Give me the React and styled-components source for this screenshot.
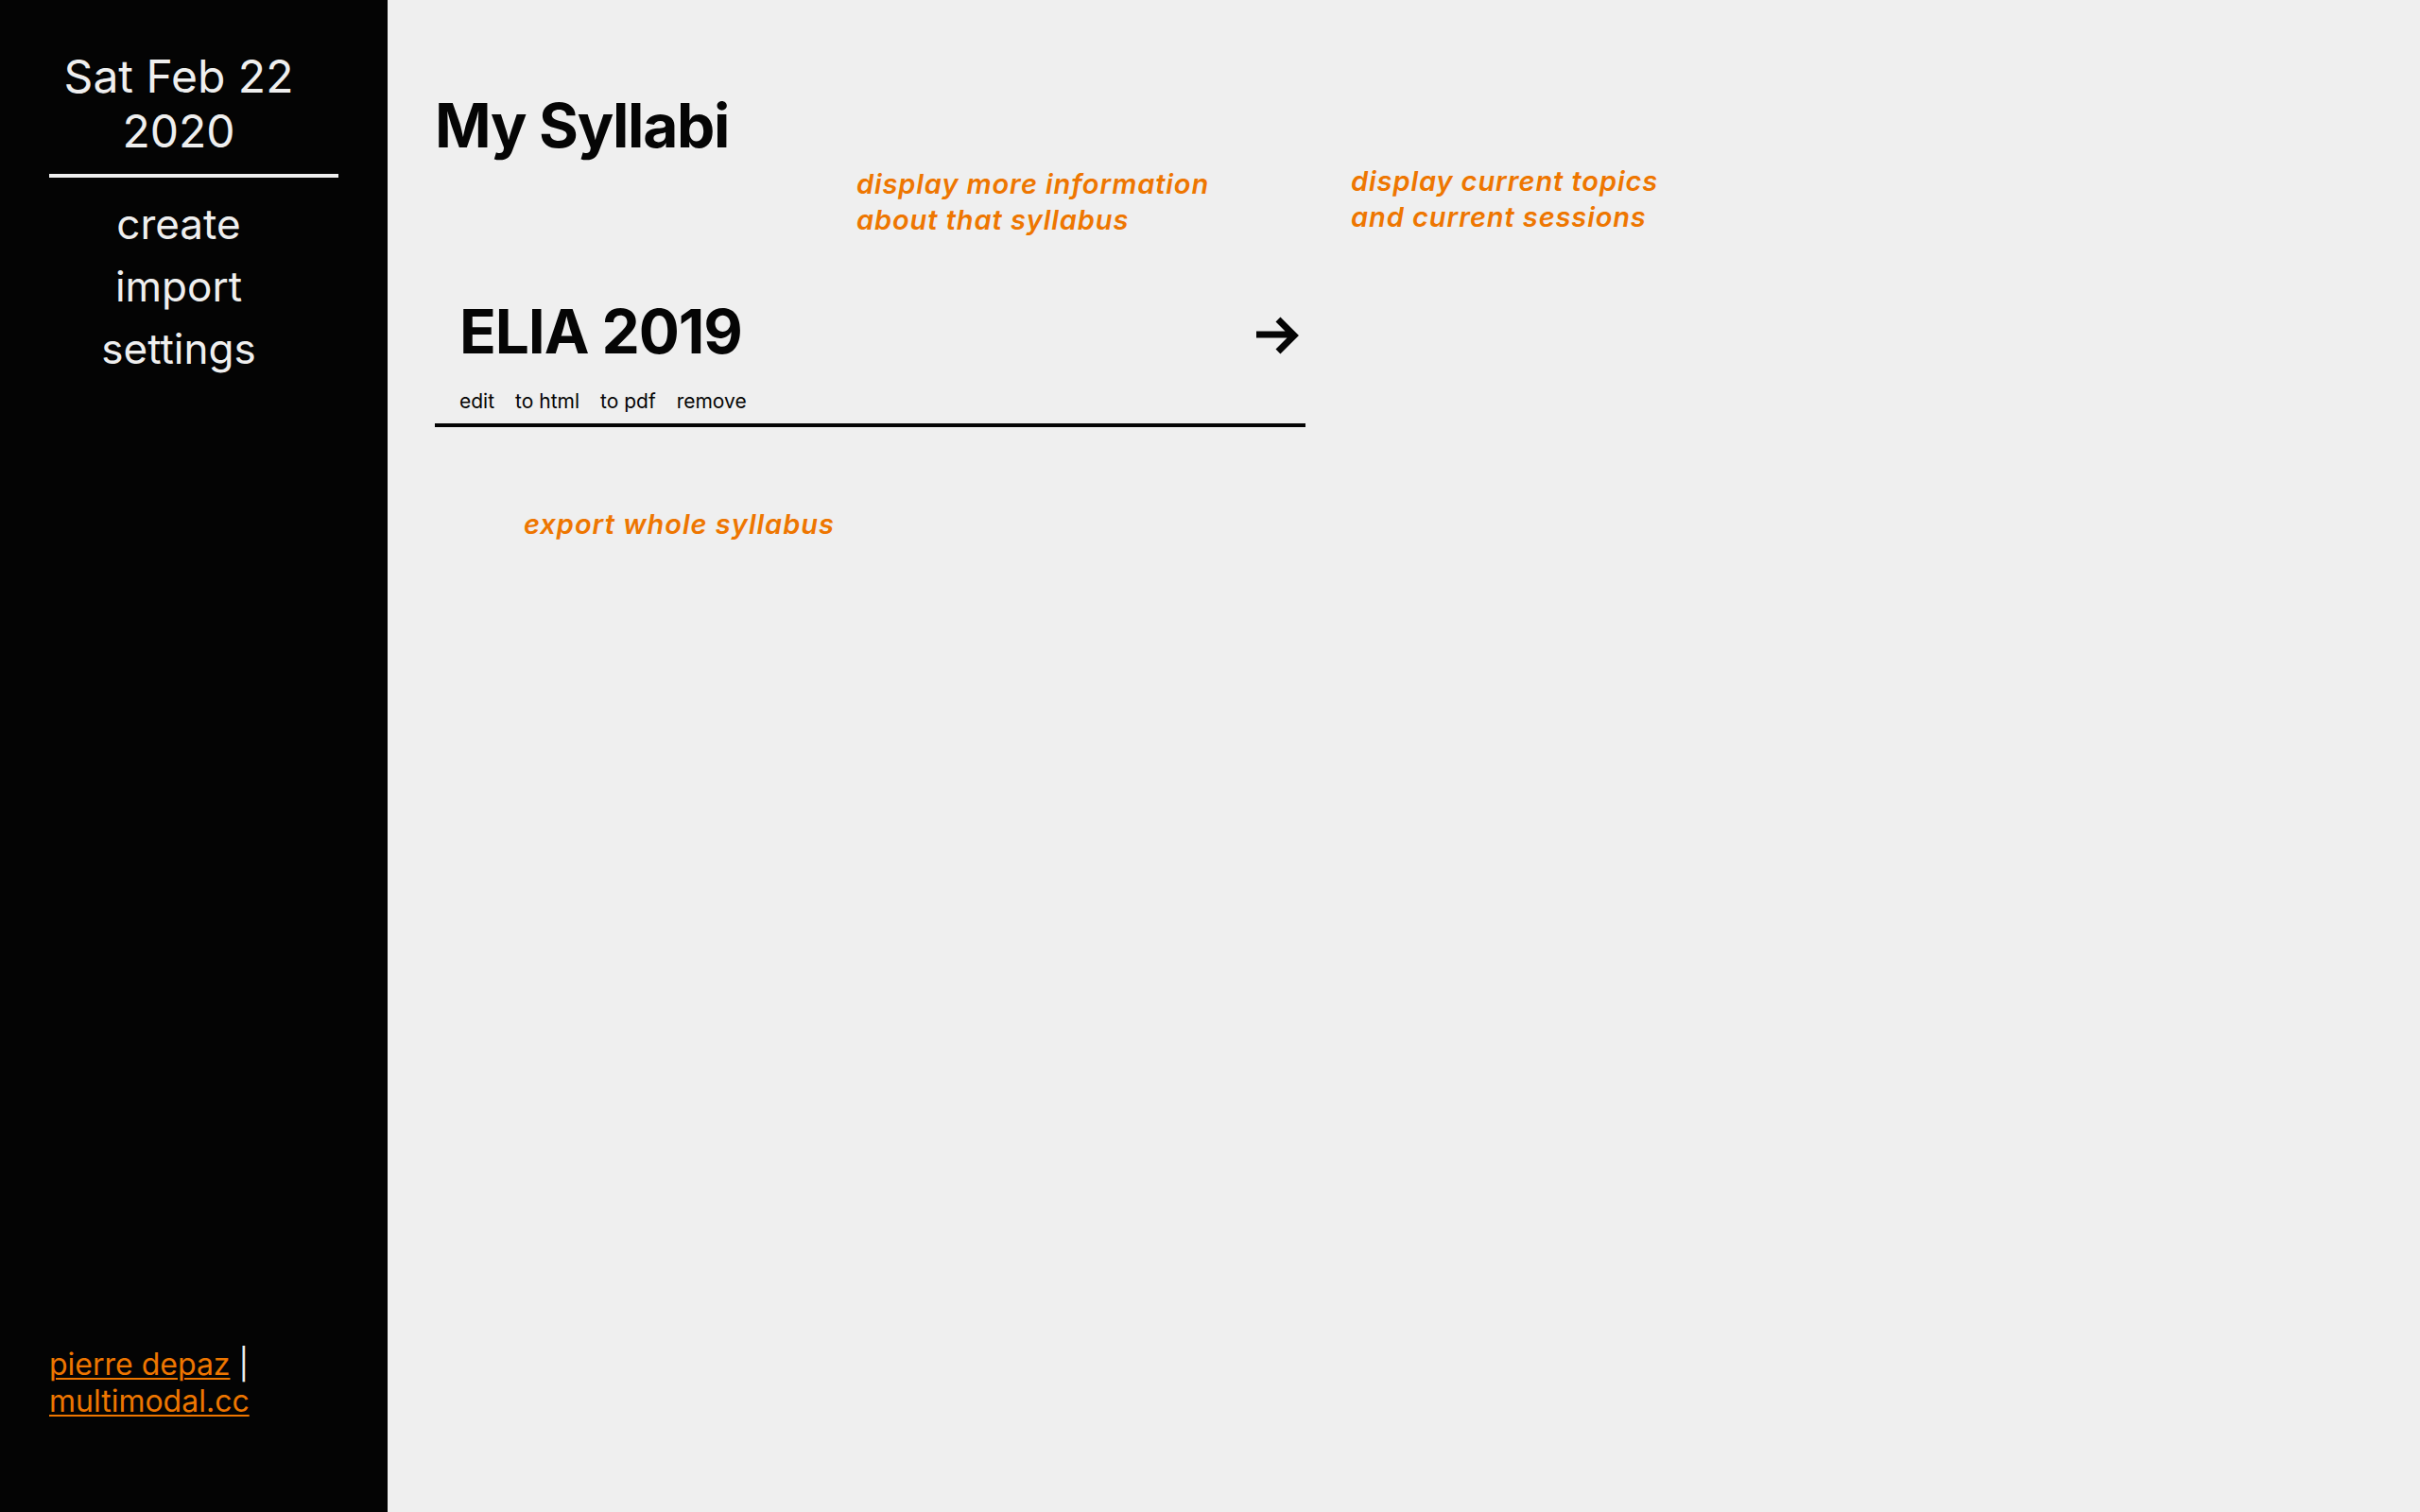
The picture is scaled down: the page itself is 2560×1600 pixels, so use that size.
import React from "react"
import styled, { createGlobalStyle } from "styled-components"

const ORANGE = "#ee7600"

const syllabi = [{ id: 1, title: "ELIA 2019" }]
const actions = ["edit", "to html", "to pdf", "remove"]
const navLinks = ["create", "import", "settings"]

const App = () => {
  return (
    <React.Fragment>
      <GlobalStyle />
      <StyledLayout>
        <StyledSidebar>
          <StyledDate>
            Sat Feb 22
            <br />
            2020
          </StyledDate>
          <StyledRule />
          <StyledNav>
            {navLinks.map(link => (
              <li key={link}>
                <a href="#">{link}</a>
              </li>
            ))}
          </StyledNav>
          <StyledFooter>
            <a href="#">pierre depaz</a> |<br />
            <a href="#">multimodal.cc</a>
          </StyledFooter>
        </StyledSidebar>

        <StyledMain>
          <StyledTitle>My Syllabi</StyledTitle>
          <StyledNotes>
            <StyledNote>
              display more information
              <br />
              about that syllabus
            </StyledNote>
            <StyledNote $raise>
              display current topics
              <br />
              and current sessions
            </StyledNote>
          </StyledNotes>

          {syllabi.map(item => (
            <StyledCard key={item.id}>
              <StyledCardHead>
                <StyledCardTitle>{item.title}</StyledCardTitle>
                <StyledArrow viewBox="0 0 48 44" aria-label="open">
                  <path
                    d="M0 21h38M23 5l17 17-17 17"
                    fill="none"
                    stroke="#050505"
                    strokeWidth="7"
                  />
                </StyledArrow>
              </StyledCardHead>
              <StyledActions>
                {actions.map(action => (
                  <li key={action}>{action}</li>
                ))}
              </StyledActions>
            </StyledCard>
          ))}

          <StyledExportNote>export whole syllabus</StyledExportNote>
        </StyledMain>
      </StyledLayout>
    </React.Fragment>
  )
}

const GlobalStyle = createGlobalStyle`
  html, body {
    margin: 0;
    padding: 0;
    background: #efefef;
    font-family: Inter, "Noto Sans", sans-serif;
  }
  * {
    box-sizing: border-box;
  }
`

const StyledLayout = styled.div`
  display: flex;
  min-height: 1600px;
`

const StyledSidebar = styled.aside`
  display: flex;
  flex-direction: column;
  width: 410px;
  flex-shrink: 0;
  background-color: #040404;
  color: #efefef;
  padding: 52px 52px 98px;
`

const StyledDate = styled.div`
  font-size: 48px;
  line-height: 58px;
  text-align: center;
  padding-right: 32px;
`

const StyledRule = styled.hr`
  border: 0;
  height: 4px;
  margin: 16px 0 16px;
  background: #efefef;
`

const StyledNav = styled.ul`
  list-style: none;
  margin: 0;
  padding: 0 32px 0 0;
  text-align: center;
  li {
    font-size: 44px;
    line-height: 66px;
  }
  a {
    color: #efefef;
    text-decoration: none;
  }
`

const StyledFooter = styled.div`
  margin-top: auto;
  font-size: 32px;
  color: #efefef;
  a {
    color: ${ORANGE};
    text-decoration: underline;
    text-underline-offset: 3px;
    text-decoration-thickness: 2px;
  }
`

const StyledMain = styled.main`
  flex: 1;
  padding: 94px 50px 0;
  color: #050505;
`

const StyledTitle = styled.h1`
  margin: 0;
  font-size: 64px;
  line-height: 78px;
  font-weight: 700;
  letter-spacing: -1.3px;
`

const StyledNotes = styled.div`
  display: flex;
  align-items: flex-start;
  gap: 150px;
  margin-top: 4px;
  padding-left: 446px;
`

const StyledNote = styled.p`
  margin: ${props => (props.$raise ? "-3px" : "0")} 0 0;
  font-size: 29px;
  line-height: 38px;
  font-weight: 600;
  font-style: italic;
  letter-spacing: 0.9px;
  color: ${ORANGE};
`

const StyledCard = styled.section`
  width: 921px;
  margin-top: 60px;
  padding: 0 4px 11px 26px;
  border-bottom: 4px solid #050505;
`

const StyledCardHead = styled.div`
  display: flex;
  align-items: center;
  justify-content: space-between;
`

const StyledCardTitle = styled.h2`
  margin: 0;
  font-size: 64px;
  line-height: 78px;
  font-weight: 700;
  letter-spacing: -1.1px;
`

const StyledArrow = styled.svg`
  width: 48px;
  height: 44px;
  margin-top: 8px;
`

const StyledActions = styled.ul`
  display: flex;
  gap: 22px;
  list-style: none;
  margin: 23px 0 0;
  padding: 0;
  li {
    font-size: 21px;
    line-height: 24px;
    cursor: pointer;
  }
`

const StyledExportNote = styled.p`
  margin: 84px 0 0 94px;
  font-size: 29px;
  line-height: 38px;
  font-weight: 600;
  font-style: italic;
  letter-spacing: 1px;
  color: ${ORANGE};
`

export default App
